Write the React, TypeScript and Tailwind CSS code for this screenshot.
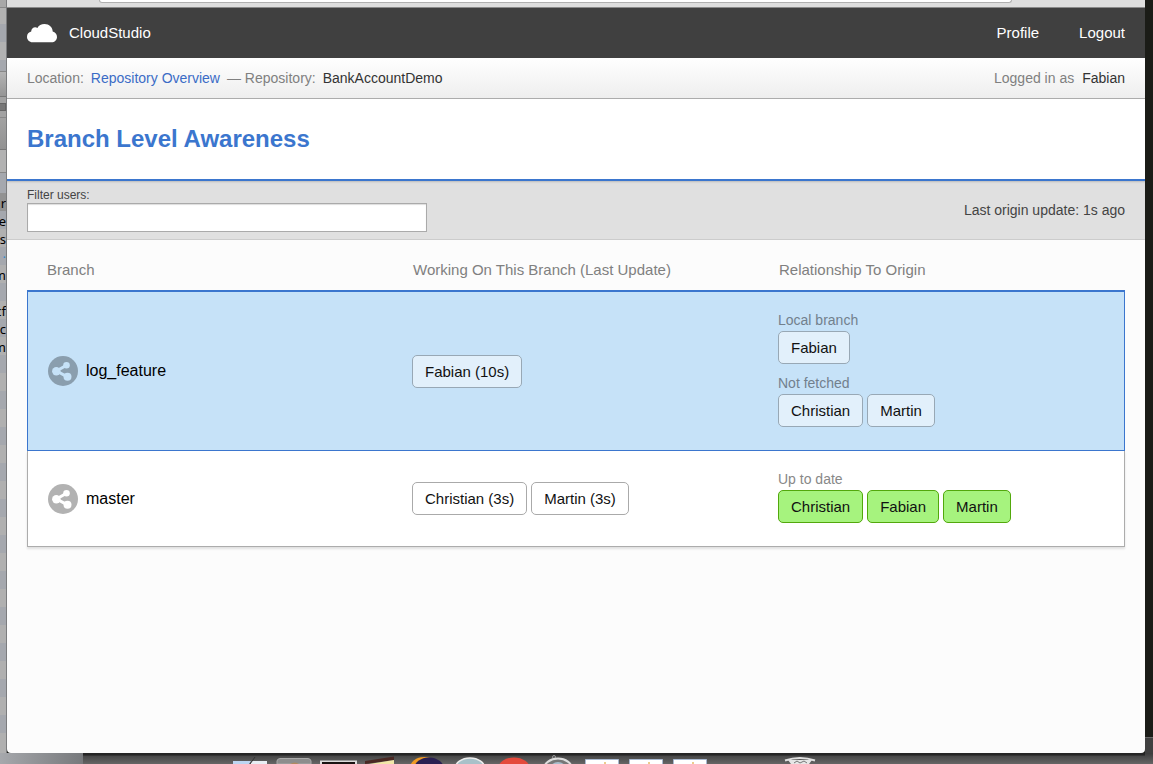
import type { ReactNode } from "react";

type Tone = "plain" | "tinted" | "green";

const chipTone: Record<Tone, string> = {
  plain: "border-[#aaaaaa] bg-white",
  tinted: "border-[#98a8b5] bg-[#e2f0fb]",
  green: "border-[#52a80c] bg-[#a6f37e]",
};

function Chip({ tone, children }: { tone: Tone; children: ReactNode }) {
  return (
    <button
      type="button"
      className={`h-[33px] rounded-[5px] border px-3 text-[15px] leading-none text-[#111] ${chipTone[tone]}`}
    >
      {children}
    </button>
  );
}

function ChipGroup({ label, names, tone }: { label: string; names: string[]; tone: Tone }) {
  return (
    <div>
      <p className={`text-sm leading-[21px] ${tone === "tinted" ? "text-[#72808d]" : "text-[#888]"}`}>{label}</p>
      <div className="flex flex-wrap gap-1">
        {names.map((name) => (
          <Chip key={name} tone={tone}>
            {name}
          </Chip>
        ))}
      </div>
    </div>
  );
}

function CloudIcon() {
  return (
    <svg width="30" height="19" viewBox="0 0 30 19" fill="#fff" aria-hidden="true">
      <path d="M5.500 18.300C2.400 18.300 0 15.900 0 12.800 0 10 1.800 8 4.200 7.500 4.200 5 6 3.300 8.300 3.300 9.100 3.300 9.800 3.500 10.400 3.900 11.600 1.600 14.300 0 17.500 0 22.200 0 25.600 3.200 25.700 7.600 28.200 8.300 30 10.400 30 13 30 16 27.600 18.300 24.500 18.300Z" />
    </svg>
  );
}

function ShareIcon({ active }: { active: boolean }) {
  const ink = active ? "#8a9eae" : "#b2b2b2";
  const paper = active ? "#c6e2f8" : "#ffffff";
  return (
    <svg width="30" height="30" viewBox="0 0 30 30" className="shrink-0" aria-hidden="true">
      <circle cx="15" cy="15" r="15" fill={ink} />
      <path d="M18.500 9.200 8.500 15 19.500 20.800" fill="none" stroke={paper} strokeWidth="3" />
      <circle cx="8.300" cy="15.200" r="4.200" fill={paper} />
      <circle cx="18.500" cy="9.300" r="3.300" fill={paper} />
      <circle cx="19.500" cy="20.800" r="4" fill={paper} />
    </svg>
  );
}

const listRows = ["ur", "te", "gs", "·", "m", "", "cf", "c", "m", ...Array<string>(22).fill("")];

function BackgroundWindow() {
  return (
    <div
      aria-hidden="true"
      className="flex w-[7px] shrink-0 flex-col overflow-hidden border-r border-[#7b7c7e] bg-[#b0b0b0] font-['Noto_Sans',sans-serif] text-[13px] leading-5 text-black"
    >
      <div className="h-2 shrink-0 border-b border-[#888] bg-[#a8a8a8]" />
      <div className="h-4 shrink-0 bg-[#b2b2b2]" />
      <div className="h-[18px] shrink-0 bg-[#a5a8ae]" />
      <div className="h-[18px] shrink-0 bg-[#b2b2b2]" />
      <div className="h-3 shrink-0 border-b border-[#888] bg-[#a5a8ae]" />
      <div className="h-[25px] shrink-0 border-b border-[#777] bg-linear-to-b from-[#b4b4b4] to-[#959595]" />
      <div className="flex h-[21px] shrink-0 items-center border-b border-[#888] bg-[#a2a2a2]">
        <div className="h-2 w-full border-y border-r border-[#666] bg-[#777]" />
      </div>
      <div className="h-8 shrink-0 border-b border-[#777] bg-linear-to-b from-[#a2a2a2] to-[#929292]" />
      <div className="h-[23px] shrink-0 border-b border-[#888] bg-[#b2b2b2]" />
      <div className="h-5 shrink-0 bg-[#a5a8ae]" />
      {listRows.map((text, i) => (
        <div
          key={i}
          className={`flex h-[18px] shrink-0 justify-end ${
            i === 0 ? "bg-[#929292]" : i % 2 ? "bg-[#a5a8ae]" : "bg-[#b0b0b0]"
          } ${i === 3 ? "text-[#3388cc]" : ""}`}
        >
          {text}
        </div>
      ))}
    </div>
  );
}

function Dock() {
  return (
    <div
      aria-hidden="true"
      className="flex h-[11px] shrink-0 overflow-hidden bg-linear-to-b from-[#3c3c3c] to-[#666]"
    >
      <div className="w-[83px] shrink-0 bg-linear-to-r from-[#a6a8ac] to-[#77797c]" />
      <svg width="1070" height="11" viewBox="83 0 1070 11" className="shrink-0">
        <path d="M83 0H1145V2.500H83Z" fill="#252525" />
        <path d="M233 8H251L249 11H233Z" fill="#bdd6f2" />
        <path d="M252 8H267V11H250Z" fill="#e8eef4" />
        <path d="M255 4 250 11" stroke="#333" />
        <path d="M277 11V8Q277 6 280 5.500H308Q311 6 311 8V11Z" fill="#8d8d8d" stroke="#a9a9a9" />
        <path d="M290 11Q295 8 299 11Z" fill="#b08a60" />
        <path d="M320 7.500H357V11H320Z" fill="#ddd" />
        <path d="M322 9H355V11H322Z" fill="#191312" />
        <path d="M365 8 394 3.500V7L365 11Z" fill="#4a2823" />
        <path d="M369 11 394 7V11Z" fill="#f1e6a8" />
        <ellipse cx="424" cy="15" rx="14" ry="11" fill="#ef9a25" />
        <ellipse cx="429" cy="16" rx="15" ry="11.500" fill="#2a2052" />
        <ellipse cx="470" cy="16" rx="15" ry="11" fill="#a9c1c9" stroke="#eee" strokeWidth="1.500" />
        <ellipse cx="514" cy="16" rx="16" ry="11.500" fill="#e44a3c" />
        <circle cx="554" cy="4" r="1.500" fill="none" stroke="#999" />
        <ellipse cx="558" cy="16" rx="14" ry="10.500" fill="#777" stroke="#ddd" strokeWidth="2" />
        <ellipse cx="558" cy="16" rx="8" ry="7" fill="#a9bdcc" />
        <path d="M585.500 6.500H618.500V12H585.500ZM629.500 6.500H662.500V12H629.500ZM673.500 6.500H706.500V12H673.500Z" fill="#fff" stroke="#a8b8d0" />
        <path d="M605 9V11M649 9V11M693 9V11" stroke="#e8bc68" strokeWidth="1.500" />
        <path d="M788 7 791 11H809L812 7Z" fill="#e6e6e6" />
        <path d="M785 7.500Q800 2.500 815 7.500" fill="none" stroke="#e0e0e0" strokeWidth="2" />
        <path d="M794 10 797 8 800 10 804 8 807 10" fill="none" stroke="#777" />
      </svg>
    </div>
  );
}

function Branch({ name, active }: { name: string; active: boolean }) {
  return (
    <div className="flex items-center gap-2 text-base text-black">
      <ShareIcon active={active} />
      {name}
    </div>
  );
}

export default function App() {
  return (
    <div className="flex h-screen flex-col overflow-hidden bg-[#1b1c17] font-['Liberation_Sans',Arial,sans-serif]">
      <div className="flex min-h-0 flex-1">
        <BackgroundWindow />
        <div className="flex min-w-0 flex-1 flex-col overflow-hidden rounded-b-[4px] bg-[#fcfcfc]">
          <div className="flex h-2 shrink-0 justify-center border-b border-[#8a8a8a] bg-[#dedede] pr-[133px] pl-[92px]">
            <div className="h-[3px] w-full rounded-b-[3px] border-x border-b border-[#b0b0b0] bg-white" />
          </div>

          <header className="flex h-[50px] shrink-0 items-center justify-between bg-[#404040] px-5 text-[15px] text-white">
            <a href="#" className="flex items-center gap-3">
              <CloudIcon />
              CloudStudio
            </a>
            <nav className="flex gap-10">
              <a href="#profile">Profile</a>
              <a href="#logout">Logout</a>
            </nav>
          </header>

          <div className="flex h-[41px] shrink-0 items-center justify-between border-b border-[#acacac] bg-linear-to-b from-white to-[#eeeeee] px-5 text-sm text-[#808080]">
            <div className="flex gap-[7px]">
              <span>Location:</span>
              <a href="#repositories" className="text-[#3b6cc6]">
                Repository Overview
              </a>
              <span>— Repository:</span>
              <span className="text-[#333]">BankAccountDemo</span>
            </div>
            <div className="flex gap-2">
              <span>Logged in as</span>
              <span className="text-[#333]">Fabian</span>
            </div>
          </div>

          <div className="flex h-[82px] shrink-0 items-center border-b-2 border-[#3b76ce] bg-white px-5">
            <h1 className="text-2xl font-bold text-[#3b76ce]">Branch Level Awareness</h1>
          </div>

          <div className="flex h-[59px] shrink-0 items-center justify-between border-b border-[#cccccc] bg-[#e0e0e0] px-5 text-[#444] shadow-[inset_0_2px_2px_-1px_#bbb]">
            <div className="flex w-[400px] flex-col pb-0.5">
              <label htmlFor="filter" className="text-xs leading-4">
                Filter users:
              </label>
              <input
                id="filter"
                type="text"
                className="h-[29px] w-full border border-[#aaaaaa] bg-white px-2 text-sm shadow-[inset_0_1px_1px_#ddd] outline-none"
              />
            </div>
            <p className="text-sm">Last origin update: 1s ago</p>
          </div>

          <main className="px-5">
            <table className="w-full table-fixed border-separate border-spacing-0 text-left">
              <thead>
                <tr className="h-[50px] text-[15px] text-[#808080]">
                  <th className="pt-2.5 pl-5 font-normal">Branch</th>
                  <th className="pt-2.5 pl-5 font-normal">Working On This Branch (Last Update)</th>
                  <th className="pt-2.5 pl-5 font-normal">Relationship To Origin</th>
                </tr>
              </thead>
              <tbody>
                <tr className="bg-[#c6e2f8]">
                  <td className="border-t-2 border-b border-l border-[#3b76ce] pl-5">
                    <Branch name="log_feature" active />
                  </td>
                  <td className="border-t-2 border-b border-[#3b76ce] pl-[19px]">
                    <div className="flex flex-wrap gap-1">
                      <Chip tone="tinted">Fabian (10s)</Chip>
                    </div>
                  </td>
                  <td className="border-t-2 border-r border-b border-[#3b76ce] pt-[18px] pb-[23px] pl-[19px]">
                    <div className="flex flex-col gap-[9px]">
                      <ChipGroup label="Local branch" names={["Fabian"]} tone="tinted" />
                      <ChipGroup label="Not fetched" names={["Christian", "Martin"]} tone="tinted" />
                    </div>
                  </td>
                </tr>
                <tr className="bg-white shadow-[0_2px_2px_#e0e0e0]">
                  <td className="border-b border-l border-[#acacac] pl-5">
                    <Branch name="master" active={false} />
                  </td>
                  <td className="border-b border-[#acacac] pl-[19px]">
                    <div className="flex flex-wrap gap-1">
                      <Chip tone="plain">Christian (3s)</Chip>
                      <Chip tone="plain">Martin (3s)</Chip>
                    </div>
                  </td>
                  <td className="border-r border-b border-[#acacac] pt-[18px] pb-[23px] pl-[19px]">
                    <ChipGroup label="Up to date" names={["Christian", "Fabian", "Martin"]} tone="green" />
                  </td>
                </tr>
              </tbody>
            </table>
          </main>
        </div>
        <div aria-hidden="true" className="flex w-2 shrink-0 flex-col justify-end">
          <div className="h-4 border-t border-[#666] bg-[#404040]" />
        </div>
      </div>
      <Dock />
    </div>
  );
}
